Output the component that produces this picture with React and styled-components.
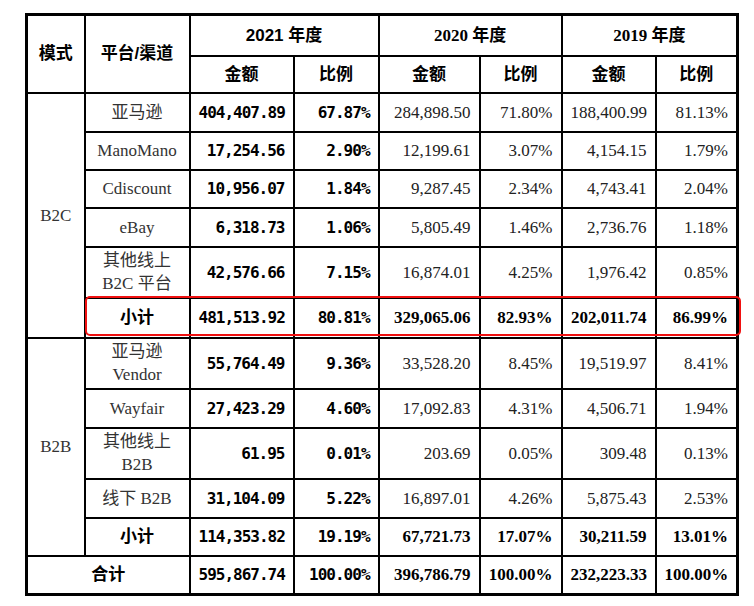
import React from "react";
import styled, { createGlobalStyle } from "styled-components";

const GlobalStyle = createGlobalStyle`
  html, body {
    margin: 0;
    background: #fff;
  }
  body {
    font-family: "Liberation Serif", "Noto Sans CJK SC", serif;
    color: #000;
  }
`;

const Page = styled.div`
  position: relative;
  padding: 13px 0 0 25px;
`;

const Table = styled.table`
  border-collapse: collapse;
  table-layout: fixed;
  width: 711px;
  border: 3px solid #000;
`;

const Cell = styled.td`
  border: 2px solid #000;
  padding: 0 8px;
  height: ${({ h }) => h || 38}px;
  text-align: ${({ align }) => align || "center"};
  vertical-align: middle;
  font-size: 17px;
  line-height: 23px;
  white-space: nowrap;
  box-sizing: border-box;
`;

const HeadCell = styled(Cell).attrs({ as: "th" })`
  font-family: ${({ $serifDigits }) =>
    $serifDigits
      ? `"Liberation Serif", "Noto Sans CJK SC", serif`
      : `"Liberation Sans", "Noto Sans CJK SC", sans-serif`};
  font-weight: 700;
`;

const Label = styled(Cell)`
  font-family: ${({ $bold }) =>
    $bold
      ? `"Liberation Sans", "Noto Sans CJK SC", sans-serif`
      : `"Liberation Serif", "Noto Sans CJK SC", serif`};
  font-weight: ${({ $bold }) => ($bold ? 700 : 400)};
  color: ${({ $bold }) => ($bold ? "#000" : "#333")};
`;

const Amount = styled(Cell)`
  text-align: right;
  font-family: "DejaVu Sans Mono", monospace;
  font-weight: 700;
  font-size: 16px;
  letter-spacing: -1px;
`;

const Num = styled(Cell)`
  text-align: right;
  font-weight: ${({ $bold }) => ($bold ? 700 : 400)};
  color: ${({ $bold }) => ($bold ? "#000" : "#222")};
`;

const Highlight = styled.div`
  position: absolute;
  left: 85px;
  top: 296px;
  width: 656px;
  height: 40px;
  box-sizing: border-box;
  border: 2px solid #f01010;
  border-radius: 5px;
  pointer-events: none;
`;

const widths = [58, 105, 104, 85, 101, 82, 94, 82];

const b2c = [
  { channel: ["亚马逊"], h: 39, v: ["404,407.89", "67.87%", "284,898.50", "71.80%", "188,400.99", "81.13%"] },
  { channel: ["ManoMano"], h: 38, v: ["17,254.56", "2.90%", "12,199.61", "3.07%", "4,154.15", "1.79%"] },
  { channel: ["Cdiscount"], h: 38, v: ["10,956.07", "1.84%", "9,287.45", "2.34%", "4,743.41", "2.04%"] },
  { channel: ["eBay"], h: 39, v: ["6,318.73", "1.06%", "5,805.49", "1.46%", "2,736.76", "1.18%"] },
  { channel: ["其他线上", "B2C 平台"], h: 51, v: ["42,576.66", "7.15%", "16,874.01", "4.25%", "1,976.42", "0.85%"] },
  { channel: ["小计"], h: 40, total: true, v: ["481,513.92", "80.81%", "329,065.06", "82.93%", "202,011.74", "86.99%"] },
];

const b2b = [
  { channel: ["亚马逊", "Vendor"], h: 51, v: ["55,764.49", "9.36%", "33,528.20", "8.45%", "19,519.97", "8.41%"] },
  { channel: ["Wayfair"], h: 39, v: ["27,423.29", "4.60%", "17,092.83", "4.31%", "4,506.71", "1.94%"] },
  { channel: ["其他线上", "B2B"], h: 51, v: ["61.95", "0.01%", "203.69", "0.05%", "309.48", "0.13%"] },
  { channel: ["线下 B2B"], h: 39, v: ["31,104.09", "5.22%", "16,897.01", "4.26%", "5,875.43", "2.53%"] },
  { channel: ["小计"], h: 38, total: true, v: ["114,353.82", "19.19%", "67,721.73", "17.07%", "30,211.59", "13.01%"] },
];

const grand = ["595,867.74", "100.00%", "396,786.79", "100.00%", "232,223.33", "100.00%"];

const Lines = ({ parts }) =>
  parts.map((p, i) => (
    <React.Fragment key={i}>
      {i > 0 && <br />}
      {p}
    </React.Fragment>
  ));

const Values = ({ v, h, bold }) => (
  <>
    <Amount h={h}>{v[0]}</Amount>
    <Amount h={h}>{v[1]}</Amount>
    {v.slice(2).map((x, i) => (
      <Num key={i} h={h} $bold={bold}>{x}</Num>
    ))}
  </>
);

const Group = ({ name, rows }) =>
  rows.map((r, i) => (
    <tr key={i}>
      {i === 0 && <Label rowSpan={rows.length}>{name}</Label>}
      <Label h={r.h} $bold={r.total}>
        <Lines parts={r.channel} />
      </Label>
      <Values v={r.v} h={r.h} bold={r.total} />
    </tr>
  ));

export default function App() {
  return (
    <>
      <GlobalStyle />
      <Page>
        <Table>
          <colgroup>
            {widths.map((w, i) => (
              <col key={i} style={{ width: w }} />
            ))}
          </colgroup>
          <thead>
            <tr>
              <HeadCell rowSpan={2}>模式</HeadCell>
              <HeadCell rowSpan={2}>平台/渠道</HeadCell>
              <HeadCell colSpan={2} h={41}>2021 年度</HeadCell>
              <HeadCell colSpan={2} h={41} $serifDigits>2020 年度</HeadCell>
              <HeadCell colSpan={2} h={41} $serifDigits>2019 年度</HeadCell>
            </tr>
            <tr>
              {[0, 1, 2].map((i) => (
                <React.Fragment key={i}>
                  <HeadCell h={37}>金额</HeadCell>
                  <HeadCell h={37}>比例</HeadCell>
                </React.Fragment>
              ))}
            </tr>
          </thead>
          <tbody>
            <Group name="B2C" rows={b2c} />
            <Group name="B2B" rows={b2b} />
            <tr>
              <Label colSpan={2} $bold h={39}>合计</Label>
              <Values v={grand} h={39} bold />
            </tr>
          </tbody>
        </Table>
        <Highlight />
      </Page>
    </>
  );
}
